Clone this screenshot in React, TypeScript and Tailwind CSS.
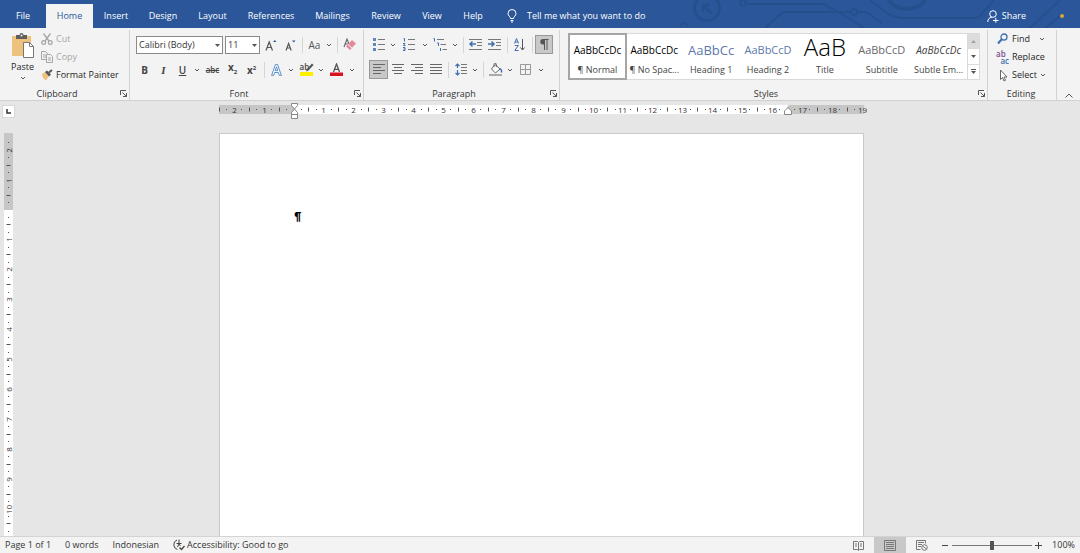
import React from "react";

const UNIT = 29.9; // one centimetre on the rulers

const TABS = [
  { name: "File", width: "w-[46px]" },
  { name: "Home", width: "w-[47px]" },
  { name: "Insert", width: "w-[46px]" },
  { name: "Design", width: "w-[48px]" },
  { name: "Layout", width: "w-[51px]" },
  { name: "References", width: "w-[66px]" },
  { name: "Mailings", width: "w-[57px]" },
  { name: "Review", width: "w-[50px]" },
  { name: "View", width: "w-[42px]" },
  { name: "Help", width: "w-[40px]" },
];

const STYLES = [
  { name: "¶ Normal", sample: "AaBbCcDc", look: "text-[10px] text-black" },
  { name: "¶ No Spac...", sample: "AaBbCcDc", look: "text-[10px] text-black" },
  { name: "Heading 1", sample: "AaBbCc", look: "text-[13px] text-[#5b78ab]" },
  { name: "Heading 2", sample: "AaBbCcD", look: "text-[11px] text-[#5b78ab]" },
  { name: "Title", sample: "AaB", look: "text-[24px] font-light leading-4 pb-[6px] text-black" },
  { name: "Subtitle", sample: "AaBbCcD", look: "text-[11px] text-[#6a6a6a]" },
  { name: "Subtle Em...", sample: "AaBbCcDc", look: "text-[10px] italic text-[#404040]" },
];

/* ---------- small shared pieces ---------- */

function Chevron() {
  return (
    <svg width="6" height="4" viewBox="0 0 6 4" fill="none" stroke="#555" aria-hidden="true">
      <path d="M1 1l2 2 2-2" />
    </svg>
  );
}

function Triangle({ className = "" }: { className?: string }) {
  return (
    <svg width="5" height="3" viewBox="0 0 5 3" className={className} aria-hidden="true">
      <path d="M0 0h5L2.5 3z" fill="#555" />
    </svg>
  );
}

function Tool({
  label,
  className = "w-[19px]",
  active = false,
  children,
}: {
  label: string;
  className?: string;
  active?: boolean;
  children: React.ReactNode;
}) {
  return (
    <button
      type="button"
      aria-label={label}
      aria-pressed={active}
      className={`flex h-[19px] shrink-0 items-center justify-center ${className} ${
        active ? "border border-[#989898] bg-[#c8c8c8]" : ""
      }`}
    >
      {children}
    </button>
  );
}

function More({ label }: { label: string }) {
  return (
    <Tool label={`${label} options`} className="w-[10px]">
      <Chevron />
    </Tool>
  );
}

function Divider() {
  return (
    <div className="flex h-4 w-[6px] shrink-0 justify-center">
      <span className="w-px bg-[#d5d5d5]" />
    </div>
  );
}

function Group({
  title,
  className = "",
  launcher = true,
  children,
}: {
  title: string;
  className?: string;
  launcher?: boolean;
  children: React.ReactNode;
}) {
  return (
    <section className={`flex shrink-0 flex-col border-r border-[#d2d2d2] ${className}`}>
      <div className="flex-1">{children}</div>
      <div className="flex h-[13px] items-center pr-[2px]">
        <h2 className={`flex-1 text-center text-[#333] ${launcher ? "pr-[6px]" : ""}`}>{title}</h2>
        {launcher && (
          <button type="button" aria-label={`${title} settings`}>
            <svg width="7" height="7" viewBox="0 0 7 7" fill="none" stroke="#555" aria-hidden="true">
              <path d="M.5 5V.5H6M2.5 2.5l4 4M6.5 3v3.5H3" />
            </svg>
          </button>
        )}
      </div>
    </section>
  );
}

/* ---------- title bar ---------- */

function Circuit() {
  return (
    <svg
      className="absolute right-0 top-0 opacity-60"
      width="400"
      height="28"
      viewBox="680 0 400 28"
      fill="none"
      stroke="#234b87"
      strokeWidth="2"
      aria-hidden="true"
    >
      <circle cx="707" cy="8" r="12.5" strokeWidth="3" />
      <path d="M712 14l-9-9m0 7V5h7" strokeWidth="2.5" />
      <circle cx="743" cy="3" r="3" />
      <path d="M746 4h78l26 15 14 9" />
      <path d="M765 28l18-16h68" />
      <circle cx="854" cy="12" r="3" />
      <path d="M858 12h8l16 11M870 0l18 14 12 4h78l16-18" />
      <path d="M889 0a19 13 0 0 0 36 0" strokeWidth="4" />
      <path d="M1030 28l30-28M1046 28l16-14" />
      <path d="M680 25l4-2 4 2" />
    </svg>
  );
}

function TabBar() {
  return (
    <header className="relative flex h-7 shrink-0 overflow-hidden bg-[#2b579a] font-medium text-white">
      <Circuit />
      <nav className="relative flex pt-1" aria-label="Ribbon tabs">
        {TABS.map((tab) => (
          <button
            key={tab.name}
            type="button"
            className={`h-6 shrink-0 text-center ${tab.width} ${
              tab.name === "Home" ? "bg-[#f3f3f3] text-[#2b579a]" : ""
            }`}
          >
            {tab.name}
          </button>
        ))}
      </nav>
      <button type="button" className="relative flex items-center gap-[10px] pl-[14px] pt-1">
        <svg width="10" height="14" viewBox="0 0 10 14" fill="none" stroke="#fff" aria-hidden="true">
          <path d="M3.5 9.5C3.5 7.5 1 7 1 4.5a4 4 0 0 1 8 0c0 2.5-2.5 3-2.5 5zM3.5 11.5h3M4 13h2" />
        </svg>
        Tell me what you want to do
      </button>
      <div className="relative ml-auto flex items-center gap-[34px] pr-4 pt-1">
        <button type="button" className="flex items-center gap-[3px]">
          <svg width="12" height="13" viewBox="0 0 12 13" fill="none" stroke="#fff" aria-hidden="true">
            <circle cx="6" cy="4" r="3.3" />
            <path d="M.8 12c0-3 1.5-4.5 4-4.7M6 10.5h5.5M8.8 7.8v5" />
          </svg>
          Share
        </button>
        <span className="size-1 rounded-full bg-[#d9a441]" />
      </div>
    </header>
  );
}

/* ---------- ribbon groups ---------- */

function ClipboardGroup() {
  return (
    <Group title="Clipboard" className="w-[130px]">
      <div className="flex">
        <button type="button" className="flex w-[41px] flex-col items-center pl-1 pt-[3px]">
          <svg width="24" height="25" viewBox="0 0 24 25" aria-hidden="true">
            <path d="M1 3h19v20H1z" fill="#ecc27d" />
            <path d="M5 2h3.5a2 2 0 0 1 4 0H16v4H5z" fill="#5f5f5f" />
            <circle cx="10.5" cy="2.5" r="1" fill="#f3f3f3" />
            <path d="M12.5 9.5h6l4 4v11h-10z" fill="#fff" stroke="#777" />
            <path d="M18.5 9.5v4h4" fill="none" stroke="#777" />
          </svg>
          <span className="mt-[2px] h-[13px] leading-[13px]">Paste</span>
          <span className="flex h-[10px] items-center">
            <Chevron />
          </span>
        </button>
        <div className="flex flex-col">
          <button type="button" className="flex h-[18px] items-center gap-[3px] text-[#a6a6a6]">
            <svg width="12" height="12" viewBox="0 0 12 12" fill="none" stroke="#a6a6a6" strokeWidth="1.3" aria-hidden="true">
              <path d="M2.5.5L8 8M9.5.5L4 8" />
              <circle cx="2.7" cy="9.5" r="1.9" />
              <circle cx="9.3" cy="9.5" r="1.9" />
            </svg>
            Cut
          </button>
          <button type="button" className="flex h-[18px] items-center gap-[3px] text-[#a6a6a6]">
            <svg width="12" height="12" viewBox="0 0 12 12" fill="#f3f3f3" stroke="#a6a6a6" aria-hidden="true">
              <path d="M.5.5h4l2 2v6h-6zM2 4h3M2 6h3" />
              <path d="M5.5 3.5h4l2 2v6h-6zM7 7h3M7 9h3" />
            </svg>
            Copy
          </button>
          <button type="button" className="flex h-[18px] items-center gap-[3px] whitespace-nowrap">
            <svg width="12" height="12" viewBox="0 0 12 12" aria-hidden="true">
              <path d="M1 5l3-2 4 4-3 4.500C3 10.500 1 8 1 5z" fill="#ecc27d" />
              <path d="M4 3l2-1.500 4 4L8 7.500z" fill="#555" />
              <path d="M8 3.500L11 1" stroke="#555" strokeWidth="2" />
            </svg>
            Format Painter
          </button>
        </div>
      </div>
    </Group>
  );
}

function Picker({ label, value, className }: { label: string; value: string; className: string }) {
  return (
    <div className={`relative shrink-0 ${className}`}>
      <select
        aria-label={label}
        defaultValue={value}
        className="h-[18px] w-full appearance-none border border-[#8a8a8a] bg-white pl-[2px] leading-4 text-[#333]"
      >
        <option>{value}</option>
      </select>
      <Triangle className="pointer-events-none absolute right-[3px] top-[8px]" />
    </div>
  );
}

function FontGroup() {
  return (
    <Group title="Font" className="w-[234px]">
      <div className="flex flex-col gap-[6px] pl-[5px] pt-[5px]">
        <div className="flex h-[19px] items-center pl-px">
          <Picker label="Font" value="Calibri (Body)" className="mr-[2px] w-[87px]" />
          <Picker label="Font size" value="11" className="w-[35px]" />
          <Tool label="Grow font" className="w-[21px]">
            <svg width="12" height="12" viewBox="0 0 12 12" fill="none" stroke="#555" strokeWidth="1.2" aria-hidden="true">
              <path d="M1 11.500l3.200-8.500 3.300 8.500M2.200 8.500h4" />
              <path d="M8 3l1.800-2L11.500 3z" fill="#2b579a" stroke="none" />
            </svg>
          </Tool>
          <Tool label="Shrink font" className="w-[18px]">
            <svg width="11" height="12" viewBox="0 0 11 12" fill="none" stroke="#555" strokeWidth="1.2" aria-hidden="true">
              <path d="M1 11.500l2.600-7 2.600 7M2 9h3.200" />
              <path d="M7 1.500l1.800 2 1.700-2z" fill="#2b579a" stroke="none" />
            </svg>
          </Tool>
          <Divider />
          <Tool label="Change case">
            <span className="text-[10px] text-[#555]">Aa</span>
          </Tool>
          <More label="Change case" />
          <Divider />
          <Tool label="Clear formatting">
            <svg width="13" height="13" viewBox="0 0 13 13" fill="none" aria-hidden="true">
              <path d="M1 9l3-8 2 5M2 6h3" stroke="#666" strokeWidth="1.1" />
              <path d="M3 8.500L9 2l4 3.500-6 6.500z" fill="#e58a9b" />
              <path d="M5 6.500L9 10" stroke="#f3f3f3" />
            </svg>
          </Tool>
        </div>
        <div className="flex h-[19px] items-center text-[10px] text-[#444]">
          <Tool label="Bold">
            <b>B</b>
          </Tool>
          <Tool label="Italic">
            <i className="font-['Liberation_Serif',serif] text-[11px] font-bold">I</i>
          </Tool>
          <Tool label="Underline">
            <span className="font-semibold underline">U</span>
          </Tool>
          <More label="Underline" />
          <Tool label="Strikethrough" className="w-[21px]">
            <span className="text-[8px] font-semibold line-through">abc</span>
          </Tool>
          <Tool label="Subscript">
            <b>
              x<span className="align-sub text-[6px]">2</span>
            </b>
          </Tool>
          <Tool label="Superscript">
            <b>
              x<span className="align-super text-[6px]">2</span>
            </b>
          </Tool>
          <Divider />
          <Tool label="Text effects">
            <svg width="11" height="12" viewBox="0 0 11 12" aria-hidden="true">
              <path d="M.6 11.400L4.400.6h2.200l3.800 10.800H8.300L7.400 8.500H3.600l-.9 2.900zM4.200 6.700h2.600L5.500 2.800z" fill="#fff" stroke="#4a86c5" strokeWidth=".9" />
            </svg>
          </Tool>
          <More label="Text effects" />
          <Tool label="Highlight" className="w-[20px]">
            <span className="relative flex h-[13px] w-[13px] border-b-4 border-[#ffee00] text-[8px] font-semibold leading-[8px]">
              ab
              <svg className="absolute left-[5px] top-0" width="9" height="9" viewBox="0 0 9 9" aria-hidden="true">
                <path d="M1 8.500l1-2.500L7 .5 8.500 2 3.500 7.500z" fill="#555" />
              </svg>
            </span>
          </Tool>
          <More label="Highlight" />
          <Tool label="Font colour" className="w-[21px]">
            <svg width="13" height="13" viewBox="0 0 13 13" fill="none" aria-hidden="true">
              <path d="M3.500 9l3-8 3 8M4.500 6.300h4" stroke="#555" strokeWidth="1.3" />
              <path d="M0 9.500h13V13H0z" fill="#d8121f" />
            </svg>
          </Tool>
          <More label="Font colour" />
        </div>
      </div>
    </Group>
  );
}

function Lines({ d }: { d: string }) {
  return (
    <svg width="12" height="13" viewBox="0 0 12 13" fill="none" stroke="#666" aria-hidden="true">
      <path d={d} />
    </svg>
  );
}

function ParagraphGroup() {
  return (
    <Group title="Paragraph" className="w-[196px]">
      <div className="flex flex-col gap-[6px] pl-[5px] pt-[5px]">
        <div className="flex h-[19px] items-center">
          <Tool label="Bullets">
            <svg width="12" height="13" viewBox="0 0 12 13" aria-hidden="true">
              <path d="M0 0h3v3H0zM0 5h3v3H0zM0 10h3v3H0z" fill="#5f86bd" />
              <path d="M5 1.500h7M5 6.500h7M5 11.500h7" stroke="#777" fill="none" />
            </svg>
          </Tool>
          <More label="Bullets" />
          <Tool label="Numbering" className="w-[22px]">
            <svg width="12" height="13" viewBox="0 0 12 13" fill="none" aria-hidden="true">
              <path d="M.5.5h1v3M0 5.500h2L.5 7.500h2M0 9.500h2v3H0M.5 11H2" stroke="#3f6fae" />
              <path d="M5 1.500h7M5 6.500h7M5 11.500h7" stroke="#777" />
            </svg>
          </Tool>
          <More label="Numbering" />
          <Tool label="Multilevel list" className="w-[20px]">
            <svg width="14" height="13" viewBox="0 0 14 13" fill="none" aria-hidden="true">
              <path d="M.5.5h1v3M4 5h1.500v3M7.500 10v3" stroke="#3f6fae" />
              <path d="M4 1.500h7M7.500 6.500H13M9.500 11.500H14" stroke="#777" />
            </svg>
          </Tool>
          <More label="Multilevel list" />
          <Divider />
          <Tool label="Decrease indent">
            <svg width="13" height="11" viewBox="0 0 13 11" fill="none" aria-hidden="true">
              <path d="M0 .5h13M8 3.500h5M8 6.500h5M0 10.500h13" stroke="#777" />
              <path d="M7 5H2M3.500 2.500L1 5l2.500 2.500" stroke="#3f6fae" strokeWidth="1.5" />
            </svg>
          </Tool>
          <Tool label="Increase indent">
            <svg width="13" height="11" viewBox="0 0 13 11" fill="none" aria-hidden="true">
              <path d="M0 .5h13M8 3.500h5M8 6.500h5M0 10.500h13" stroke="#777" />
              <path d="M0 5h5.500M3.500 2.500L6 5 3.500 7.500" stroke="#3f6fae" strokeWidth="1.5" />
            </svg>
          </Tool>
          <Divider />
          <Tool label="Sort">
            <svg width="12" height="13" viewBox="0 0 12 13" fill="none" aria-hidden="true">
              <path d="M.5 5.500l2-5 2 5M1.200 4h2.600M.8 7.500h3.500l-3.500 5h3.700" stroke="#3f6fae" />
              <path d="M8.500 1v11M6.500 9.500l2 2.500 2-2.500" stroke="#555" />
            </svg>
          </Tool>
          <Divider />
          <Tool label="Show formatting marks" className="w-[18px]" active>
            <svg width="9" height="11" viewBox="0 0 9 11" aria-hidden="true">
              <path d="M8.500 0H3a2.700 2.700 0 0 0 0 5.500h1V11h1V1h1.500v10h1V1h1z" fill="#555" />
            </svg>
          </Tool>
        </div>
        <div className="flex h-[19px] items-center">
          <Tool label="Align left" active>
            <Lines d="M0 1.500h12M0 4.500h8M0 7.500h12M0 10.500h8" />
          </Tool>
          <Tool label="Centre">
            <Lines d="M0 1.500h12M2 4.500h8M0 7.500h12M2 10.500h8" />
          </Tool>
          <Tool label="Align right">
            <Lines d="M0 1.500h12M4 4.500h8M0 7.500h12M4 10.500h8" />
          </Tool>
          <Tool label="Justify">
            <Lines d="M0 1.500h12M0 4.500h12M0 7.500h12M0 10.500h12" />
          </Tool>
          <Divider />
          <Tool label="Line spacing">
            <svg width="12" height="13" viewBox="0 0 12 13" fill="none" aria-hidden="true">
              <path d="M6 1.500h6M6 4.500h6M6 7.500h6M6 10.500h6" stroke="#777" />
              <path d="M2.500 1v4M.5 3l2-2 2 2M2.500 7v5M.5 10l2 2 2-2" stroke="#3f6fae" strokeWidth="1.2" />
            </svg>
          </Tool>
          <More label="Line spacing" />
          <Divider />
          <Tool label="Shading">
            <svg width="14" height="13" viewBox="0 0 14 13" fill="none" aria-hidden="true">
              <path d="M6 1.500l5 4.500-4.500 4L2.500 6zM5 4V1.500a1.200 1.200 0 0 1 2.400 0V4" fill="#fff" stroke="#666" />
              <path d="M11 5.500c1.500 1 1.800 2.500 1.300 4" stroke="#3f6fae" strokeWidth="1.5" />
              <path d="M0 11h13v2H0z" fill="#aaa" />
            </svg>
          </Tool>
          <More label="Shading" />
          <Tool label="Borders" className="w-[21px]">
            <svg width="11" height="11" viewBox="0 0 11 11" fill="none" stroke="#999" aria-hidden="true">
              <path d="M.5.5h10v10H.5zM5.500 1v9M1 5.500h9" />
            </svg>
          </Tool>
          <More label="Borders" />
        </div>
      </div>
    </Group>
  );
}

function StylesGroup() {
  return (
    <Group title="Styles" className="min-w-0 flex-1">
      <div className="pl-2 pr-[7px] pt-[3px]">
        <div className="flex h-[47px] border border-[#dadada] bg-white font-normal">
          {STYLES.map((style, i) => (
            <button
              key={style.name}
              type="button"
              className={`flex min-w-0 flex-1 flex-col items-center justify-end px-[3px] ${
                i === 0 ? "outline-2 -outline-offset-1 outline-[#a5a5a5]" : ""
              }`}
            >
              <span className="flex h-6 w-full items-center whitespace-nowrap">
                <span className={`mx-auto ${style.look}`}>{style.sample}</span>
              </span>
              <span className="h-[17px] whitespace-nowrap leading-[15px] text-[#444]">{style.name}</span>
            </button>
          ))}
          <div className="flex w-3 shrink-0 flex-col divide-y divide-[#dadada] border-l border-[#dadada]">
            <button type="button" aria-label="Previous styles" className="flex flex-1 items-center justify-center bg-[#dcdcdc]">
              <Triangle className="rotate-180 opacity-40" />
            </button>
            <button type="button" aria-label="Next styles" className="flex flex-1 items-center justify-center">
              <Triangle />
            </button>
            <button type="button" aria-label="All styles" className="flex flex-1 flex-col items-center justify-center gap-px">
              <span className="h-px w-[5px] bg-[#555]" />
              <Triangle />
            </button>
          </div>
        </div>
      </div>
    </Group>
  );
}

function EditingGroup() {
  return (
    <Group title="Editing" className="w-[69px]" launcher={false}>
      <div className="flex flex-col items-start pl-2">
        <button type="button" className="flex h-[18px] items-center gap-[3px]">
          <svg width="13" height="12" viewBox="0 0 13 12" fill="none" stroke="#3f6fae" aria-hidden="true">
            <circle cx="8" cy="4" r="3" strokeWidth="1.3" />
            <path d="M5.500 6.500L2 10.500" strokeWidth="2" />
          </svg>
          Find
          <span className="pl-[6px]">
            <Chevron />
          </span>
        </button>
        <button type="button" className="flex h-[18px] items-center gap-[3px]">
          <span className="h-[14px] w-[13px] text-left text-[8px] font-semibold leading-[7px] text-[#7a4b94]">
            ab
            <span className="block text-right text-[#3f6fae]">ac</span>
          </span>
          Replace
        </button>
        <button type="button" className="flex h-[18px] items-center gap-[3px]">
          <svg width="13" height="13" viewBox="0 0 13 13" fill="#fff" stroke="#666" aria-hidden="true">
            <path d="M4.500 1v9.500l2-2 1.500 3.500 1.500-.7L8 8h3z" />
          </svg>
          Select
          <Chevron />
        </button>
      </div>
    </Group>
  );
}

function Ribbon() {
  return (
    <div className="flex h-[73px] shrink-0 border-b border-[#d0d0d0] bg-[#f3f3f3] pt-[2px] font-medium text-[#262626]">
      <ClipboardGroup />
      <FontGroup />
      <ParagraphGroup />
      <StylesGroup />
      <EditingGroup />
      <button type="button" aria-label="Collapse the ribbon" className="mb-[2px] ml-2 mr-[7px] self-end">
        <svg width="8" height="5" viewBox="0 0 8 5" fill="none" stroke="#555" aria-hidden="true">
          <path d="M.5 4.500L4 1l3.500 3.500" />
        </svg>
      </button>
    </div>
  );
}

/* ---------- rulers ---------- */

// Numbers on whole centimetres, a tick at each half and a dot at each quarter.
function Marks({ zero, from, to, vertical = false }: { zero: number; from: number; to: number; vertical?: boolean }) {
  const marks = [];
  for (let q = from * 4; q <= to * 4; q++) {
    if (q === 0) continue;
    const at = Math.floor(zero + (q / 4) * UNIT) + 0.5;
    const x = vertical ? 4.5 : at;
    const y = vertical ? at : 4.5;
    if (q % 4 === 0) {
      marks.push(
        <text
          key={q}
          x={x}
          y={y}
          textAnchor="middle"
          dominantBaseline="central"
          transform={vertical ? `rotate(-90 ${x} ${y})` : undefined}
        >
          {Math.abs(q / 4)}
        </text>,
      );
    } else {
      const half = q % 2 === 0 ? 2 : 0.5;
      marks.push(
        <path
          key={q}
          d={vertical ? `M${x - half} ${y}h${half * 2}` : `M${x} ${y - half}v${half * 2}`}
          stroke="#555"
        />,
      );
    }
  }
  return <g>{marks}</g>;
}

function HorizontalRuler() {
  return (
    <svg
      width="645"
      height="16"
      viewBox="0 0 645 16"
      className="shrink-0 overflow-visible text-[8px]"
      fill="#333"
      role="img"
      aria-label="Horizontal ruler"
    >
      <path d="M0 0h645v9H0z" fill="#c6c6c6" />
      <path d="M75 0h494v9H75z" fill="#fff" />
      <Marks zero={75} from={-2.5} to={19} />
      <g fill="#fff" stroke="#888">
        <path d="M72.500-1.500h6v2L75.500 4l3 3.500v6h-6v-6l3-3.500-3-3.500zM72.500 9.500h6" />
        <path d="M565.500 9.500V6L569 2.500 572.500 6v3.500z" />
      </g>
    </svg>
  );
}

function VerticalRuler() {
  return (
    <div className="ml-1 w-[9px] overflow-hidden bg-white">
      <svg width="9" height="403" viewBox="0 0 9 403" className="text-[8px]" fill="#333" role="img" aria-label="Vertical ruler">
        <path d="M0 0h9v77H0z" fill="#c6c6c6" />
        <Marks zero={77} from={-2.25} to={10.75} vertical />
      </svg>
    </div>
  );
}

/* ---------- document ---------- */

function Workspace() {
  return (
    <main className="flex min-h-0 flex-1 flex-col bg-[#e6e6e6]">
      <div className="flex h-8 shrink-0 items-start pr-[15px] pt-1">
        <button
          type="button"
          aria-label="Tab selector"
          className="ml-[2px] flex h-[13px] w-[13px] shrink-0 items-center justify-center border border-[#d8d8d8] bg-white"
        >
          <svg width="5" height="5" viewBox="0 0 5 5" fill="none" stroke="#333" strokeWidth="1.5" aria-hidden="true">
            <path d="M1 0v4h4" />
          </svg>
        </button>
        <div className="flex flex-1 justify-center pl-[2px]">
          <HorizontalRuler />
        </div>
      </div>
      <div className="flex min-h-0 flex-1 pr-[15px]">
        <VerticalRuler />
        <div className="flex flex-1 justify-center overflow-hidden pl-1">
          <article className="w-[645px] shrink-0 border border-b-0 border-[#c9c9c9] bg-white px-[75px] pt-[77px] font-['Carlito','Liberation_Sans',sans-serif] text-[11px] font-bold leading-[14px] text-black">
            <p>¶</p>
          </article>
        </div>
      </div>
    </main>
  );
}

function StatusBar() {
  return (
    <footer className="flex h-[17px] shrink-0 items-center border-t border-[#d4d4d4] bg-[#f3f3f3] pl-[5px] pr-[5px] text-[#333]">
      <div className="flex gap-[14px]">
        <button type="button">Page 1 of 1</button>
        <button type="button">0 words</button>
        <button type="button">Indonesian</button>
        <button type="button" className="flex items-center gap-[2px]">
          <svg width="12" height="12" viewBox="0 0 12 12" fill="none" stroke="#444" aria-hidden="true">
            <path d="M4 1a5 5 0 0 0 .5 9.500M6 .5v4M3.500 4.500h5M6 5l-1.500 3M6 5l1.500 2" />
            <path d="M6.500 8.500l2 2 3-3.500" strokeWidth="1.3" />
          </svg>
          Accessibility: Good to go
        </button>
      </div>
      <div className="ml-auto flex h-full items-center">
        <button type="button" aria-label="Read mode" className="flex h-full w-8 items-center justify-center">
          <svg width="11" height="11" viewBox="0 0 11 11" fill="none" stroke="#777" aria-hidden="true">
            <path d="M.5 1.500h4l1 1 1-1h4v8h-4l-1 1-1-1h-4zM5.500 2.500v8M2 4h2M2 6h2M7 4h2M7 6h2" />
          </svg>
        </button>
        <button
          type="button"
          aria-label="Print layout"
          aria-pressed="true"
          className="flex h-full w-8 items-center justify-center bg-[#c8c8c8]"
        >
          <svg width="12" height="11" viewBox="0 0 12 11" fill="none" stroke="#777" aria-hidden="true">
            <path d="M.5.5h11v10H.5zM2 2.500h8M2 4.500h8M2 6.500h8M2 8.500h8" />
          </svg>
        </button>
        <button type="button" aria-label="Web layout" className="flex h-full w-8 items-center justify-center">
          <svg width="12" height="11" viewBox="0 0 12 11" fill="none" stroke="#777" aria-hidden="true">
            <path d="M4.500 9.500h-4v-9h9v3M2 2.500h6M2 4.500h4M2 6.500h3" />
            <circle cx="8.5" cy="7.5" r="2.8" />
            <path d="M6.500 6l4 3" />
          </svg>
        </button>
        <button type="button" aria-label="Zoom out" className="flex h-3 w-[14px] items-center justify-center">
          <span className="h-px w-[6px] bg-[#444]" />
        </button>
        <input
          type="range"
          aria-label="Zoom"
          min={0}
          max={200}
          defaultValue={100}
          className="h-[9px] w-20 appearance-none bg-[linear-gradient(#777,#777)] bg-[length:100%_1px] bg-center bg-no-repeat [&::-webkit-slider-thumb]:h-[9px] [&::-webkit-slider-thumb]:w-[4px] [&::-webkit-slider-thumb]:appearance-none [&::-webkit-slider-thumb]:bg-[#555]"
        />
        <button type="button" aria-label="Zoom in" className="flex w-3 justify-center">
          <svg width="7" height="7" viewBox="0 0 7 7" stroke="#444" aria-hidden="true">
            <path d="M0 3.500h7M3.500 0v7" />
          </svg>
        </button>
        <button type="button" className="pl-2">
          100%
        </button>
      </div>
    </footer>
  );
}

export default function App() {
  return (
    <div className="flex h-screen flex-col overflow-hidden font-['Open_Sans','Noto_Sans',sans-serif] text-[9px] leading-3">
      <TabBar />
      <Ribbon />
      <Workspace />
      <StatusBar />
    </div>
  );
}
